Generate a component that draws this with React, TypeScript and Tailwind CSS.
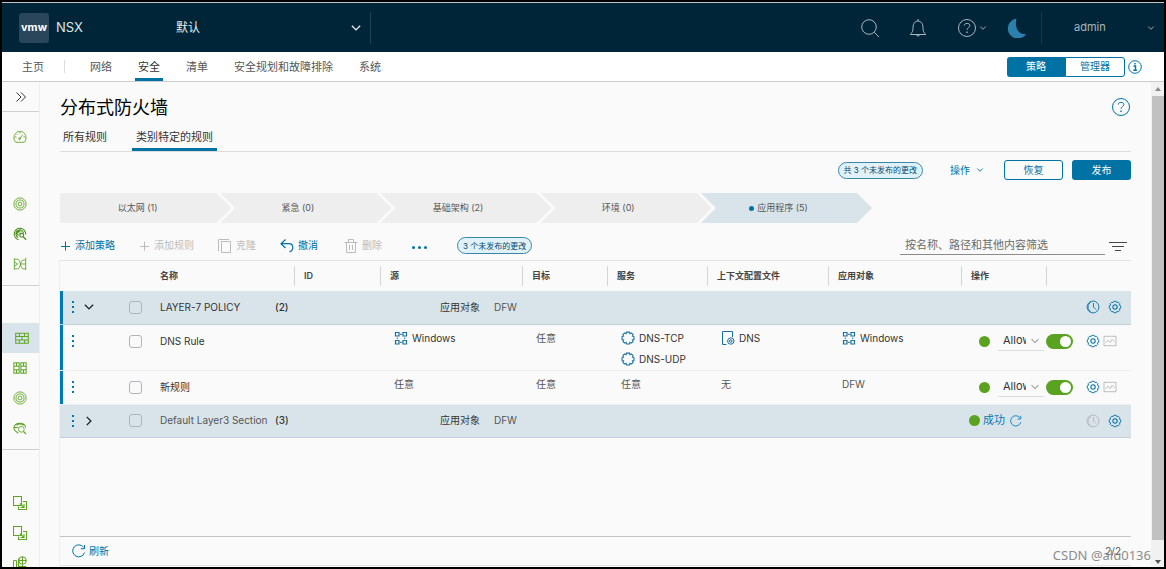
import type { ReactNode } from "react";

type IconProps = { className?: string };

function Svg({ className = "size-3.5", box = 16, children }: IconProps & { box?: number; children: ReactNode }) {
  return (
    <svg
      viewBox={`0 0 ${box} ${box}`}
      className={`shrink-0 ${className}`}
      fill="none"
      stroke="currentColor"
      strokeWidth="1"
      aria-hidden="true"
    >
      {children}
    </svg>
  );
}

const Chevron = ({ className }: IconProps) => (
  <Svg className={className}>
    <path d="M2.500 5 8 10.500 13.500 5" strokeWidth="1.800" />
  </Svg>
);

const SearchIcon = () => (
  <Svg className="size-5" box={20}>
    <circle cx="9" cy="9" r="7.300" />
    <path d="m14.300 14.300 4.700 4.700" />
  </Svg>
);

const BellIcon = () => (
  <Svg className="size-5" box={20}>
    <path d="M2 16.500h16M2.500 16c2-1.600 2.500-3 2.500-6.500C5 5.500 7.300 3 10 3s5 2.500 5 6.500c0 3.500.5 4.900 2.500 6.500M10 3V1M8.500 17c.2 1.300 2.800 1.300 3 0" />
  </Svg>
);

const HelpIcon = ({ className }: IconProps) => (
  <Svg className={className} box={20}>
    <circle cx="10" cy="10" r="8.500" />
    <path d="M7.200 7.600C7.400 4.600 12.800 4.600 12.800 7.600c0 2-2.800 2.200-2.800 4.200" />
    <path d="M10 13.500v1.500" strokeWidth="1.400" />
  </Svg>
);

const InfoIcon = () => (
  <Svg className="size-3.5" box={14}>
    <circle cx="7" cy="7" r="6.300" />
    <path d="M5.500 6h2v4M5.300 10.300h3.600M7 3v1.500" strokeWidth="1.400" />
  </Svg>
);

const MoonIcon = () => (
  <svg viewBox="0 0 20 20" className="size-5 fill-[#2d80ad]" aria-hidden="true">
    <path d="M9.500.6A10 10 0 1 0 19.200 16 C12.500 17.200 7 10.500 9.500.6z" />
  </svg>
);

const PlusIcon = () => (
  <Svg className="size-2.5" box={10}>
    <path d="M5.500 .5v9M1 5.500h9" />
  </Svg>
);

const CopyIcon = () => (
  <Svg className="size-3.5" box={14}>
    <path d="M3.500 2.500h9v11h-9zM.5 12V.5H11" />
  </Svg>
);

const UndoIcon = () => (
  <Svg className="size-3.5" box={14}>
    <path d="M5.500 .5 1 4.700 5.500 9M1.500 4.700H9c5 0 5 7 .5 8.200" strokeWidth="1.200" />
  </Svg>
);

const TrashIcon = () => (
  <Svg className="size-3.5" box={14}>
    <path d="M.5 3.500h13M2.500 3.500v10h9v-10M4.500 3V.5h5V3M5.500 6v5M8.500 6v5" />
  </Svg>
);

const FilterIcon = () => (
  <Svg className="h-2.5 w-[18px] text-[#454545]" box={10}>
    <path d="M-4 1.500h18M-1 5.500h12M2 9.500h6" />
  </Svg>
);

const RefreshIcon = ({ className }: IconProps) => (
  <Svg className={className} box={14}>
    <path d="M12.500 8.500A6 6 0 1 1 11.500 3.200M12.500 1v3.700H8.800" />
  </Svg>
);

const GearIcon = () => (
  <Svg className="size-3.5">
    <path d="M6.500 1.500h3l.6 1.500 1.600-.6 1.900 1.900-.6 1.600 1.500.6v3l-1.500.6.6 1.600-1.900 1.900-1.600-.6-.6 1.500h-3l-.6-1.500-1.600.6-1.900-1.900.6-1.600L1.500 9.500v-3L3 5.900l-.6-1.600 1.900-1.900 1.600.6z" />
    <circle cx="8" cy="8" r="2.500" strokeWidth="1.200" />
  </Svg>
);

const ClockIcon = () => (
  <Svg className="size-3.5">
    <circle cx="8" cy="8" r="6.800" />
    <path d="M5.500 2.500a6.400 6.400 0 0 0 0 11M8.500 3.500V8l3 3" />
  </Svg>
);

const ChartIcon = () => (
  <Svg className="h-3 w-3.5 text-[#b3b3b3]" box={14}>
    <path d="M0 1.500h14v11H0zM2 9l2.500-3L7 9l2.500-4 3 3" />
  </Svg>
);

const ServiceIcon = () => (
  <Svg className="size-3.5 text-[#1b6f9e]">
    <path
      d="M6.300 1.300h3.400l.5 1.800 1.700-.9 2 2-.9 1.700 1.800.5v3.300l-1.800.5.9 1.700-2 2-1.700-.9-.5 1.800H6.300l-.5-1.800-1.700.9-2-2 .9-1.700L1.200 9.700V6.400L3 5.900l-.9-1.700 2-2 1.700.9z"
      strokeWidth="1.200"
    />
  </Svg>
);

const GroupIcon = () => (
  <Svg className="size-3.5 text-[#1b6f9e]" box={14}>
    <path d="M1.500 1.500h3.500V5H1.500zM9 1.500h3.500V5H9zM1.500 9.500H5V13H1.500zM9 9.500h3.500V13H9z" strokeWidth="1.200" />
    <path d="M6 3.300h2M6 11.300h2M3.300 6.500v1.500M10.700 6.500v1.500" />
  </Svg>
);

const ProfileIcon = () => (
  <Svg className="size-3.5 text-[#1b6f9e]" box={14}>
    <path d="M5.500 13.500h-4V.5h10V6" />
    <circle cx="9.800" cy="10" r="3.200" />
    <circle cx="9.800" cy="10" r="1.300" />
  </Svg>
);

const GaugeIcon = () => (
  <Svg>
    <path d="M3 14C.8 12 .8 8.500 1.500 6.500 4-.2 12-.2 14.500 6.500c.7 2 .7 5.500-1.500 7.500zM7.500 10 11 5.500M8 2v2M2 8h2M12 8h2M4 4.500l1 1" />
    <circle cx="7.500" cy="10" r="1" />
  </Svg>
);

const TargetIcon = () => (
  <Svg>
    <circle cx="8" cy="8" r="7" />
    <circle cx="8" cy="8" r="4.600" />
    <circle cx="8" cy="8" r="2.200" />
  </Svg>
);

const DetectIcon = () => (
  <Svg className="size-3.5 text-[#4a8c1a]">
    <path d="M14.500 8.500A6.600 6.600 0 1 0 6.500 14.500M12 7A4.400 4.400 0 1 0 6 12M8.500 6a2.200 2.200 0 1 0-2 3.500" strokeWidth="1.200" />
    <path d="M3 3.500l4.500 4.500M8 1.500v3" />
    <circle cx="10" cy="9.500" r="2.200" strokeWidth="1.300" />
    <path d="m11.500 11 3.500 3.500" strokeWidth="1.500" />
  </Svg>
);

const FlowIcon = () => (
  <Svg>
    <path d="M1.500 1.500v13M14.500 1v14M1.500 2.500h4c3 0 3 11 6 11h3M1.500 13.500h4c3 0 3-10 6-10h3M8 8h6.500M1.500 5.500l4 2.500-4 2.500" />
  </Svg>
);

const WallIcon = () => (
  <Svg>
    <path d="M.8 2.500h14.400v11.500H.8zM.8 6.300h14.400M.8 10.200h14.400M5 2.500v3.800M11 2.500v3.800M8 6.300v3.900M5 10.200V14M11 10.200V14" strokeWidth="1.200" />
  </Svg>
);

const GatewayIcon = () => (
  <Svg>
    <path d="M1 2h6v12H1zM9 2h6v12H9zM1 6h6M1 10h6M9 6h6M9 10h6M4 2v4M4 10v4M12 2v4M12 10v4" strokeWidth="1.200" />
  </Svg>
);

const InspectIcon = () => (
  <Svg>
    <path d="M1 7.500C2 1 13.500 1 14.500 7.500M1 7.500h5M3 11.500C1.500 10.500 1 9 1 7.500M4 5c2-2 6-2 8 0M3 11.500l3 2.500" strokeWidth="1.200" />
    <circle cx="9.500" cy="9.500" r="3.300" />
    <path d="m12 12 3 3" strokeWidth="1.400" />
  </Svg>
);

const TransferIcon = () => (
  <Svg box={14}>
    <path d="M.5 .5h8v9h-8zM10 5.500h3.500v8h-8V10.500M7 7.500l3.500 3.500M11 8v3.500H7.500" strokeWidth="1.100" />
  </Svg>
);

const EndpointIcon = () => (
  <Svg box={14}>
    <path d="M.5 14V4.500h3V14M5.500 14V2.500M5.500 10.500h7.500V14M9.500 9v5" />
    <circle cx="9.500" cy="4.500" r="3.800" />
    <path d="M5.500 4.500h8M9.500 .5v8" />
  </Svg>
);

const MoreButton = ({ name }: { name: string }) => (
  <button type="button" aria-label={`${name} 菜单`} className="flex w-2 flex-col items-center gap-[3px]">
    <i className="size-[2px] bg-[#0079b8]" />
    <i className="size-[2px] bg-[#0079b8]" />
    <i className="size-[2px] bg-[#0079b8]" />
  </button>
);

const Tick = ({ name }: { name: string }) => (
  <input
    type="checkbox"
    aria-label={name}
    className="size-[13px] appearance-none rounded-[3px] border border-[#b0b5b8] checked:bg-[#0072a3]"
  />
);

const navItems = ["网络", "安全", "清单", "安全规划和故障排除", "系统"];

const sideGroups: { label: string; icon: ReactNode }[][] = [
  [
    { label: "威胁检测", icon: <TargetIcon /> },
    { label: "入侵检测", icon: <DetectIcon /> },
    { label: "流量分析", icon: <FlowIcon /> },
  ],
  [
    { label: "分布式防火墙", icon: <WallIcon /> },
    { label: "网关防火墙", icon: <GatewayIcon /> },
    { label: "分布式 IDS", icon: <TargetIcon /> },
    { label: "恶意软件防护", icon: <InspectIcon /> },
  ],
  [
    { label: "东西向网络", icon: <TransferIcon /> },
    { label: "南北向网络", icon: <TransferIcon /> },
    { label: "端点保护", icon: <EndpointIcon /> },
  ],
];

function Header() {
  return (
    <header className="flex h-[49px] shrink-0 items-center bg-[#002538] text-[#a9b6be]">
      <div className="ml-[17px] flex size-[30px] items-center justify-center rounded-[3px] bg-[#29465a] text-[11px] font-bold text-white">
        vmw
      </div>
      <span className="ml-[7px] text-[13px] text-[#dfe6ea]">NSX</span>
      <button type="button" className="ml-[93px] flex h-8 w-[195px] items-center justify-between border-r border-[#1f4357] pr-2 text-[#e4eaee]">
        <span className="text-[12px]">默认</span>
        <Chevron className="size-3" />
      </button>
      <div className="ml-auto flex items-center">
        <button type="button" aria-label="搜索" className="mr-7"><SearchIcon /></button>
        <button type="button" aria-label="通知" className="mr-[29px]"><BellIcon /></button>
        <button type="button" aria-label="帮助" className="mr-5 flex items-center gap-0.5">
          <HelpIcon className="size-5" />
          <Chevron className="size-2" />
        </button>
        <button type="button" aria-label="深色模式"><MoonIcon /></button>
        <button type="button" className="ml-3.5 flex h-8 w-[123px] items-center justify-between border-l border-[#0f3a50] pr-[9px] pl-8 text-[11px]">
          admin
          <Chevron className="size-2" />
        </button>
      </div>
    </header>
  );
}

function TopNav() {
  return (
    <nav className="flex h-[30px] shrink-0 items-stretch border-b border-[#cccccc] bg-white text-[11px] text-[#565656]">
      <a href="#home" className="ml-5 flex items-center pt-0.5">主页</a>
      <span className="my-2 ml-5 border-l border-[#dddddd]" />
      <div className="ml-[22px] flex gap-5">
        {navItems.map((item) => (
          <a
            key={item}
            href={`#${item}`}
            className={
              item === "安全"
                ? "flex items-center border-b-[3px] border-[#0072a3] px-[3px] pt-[5px] text-[#333333]"
                : "flex items-center px-[3px] pt-0.5"
            }
          >
            {item}
          </a>
        ))}
      </div>
      <div className="ml-auto flex items-center pr-[22px] text-[10px] text-[#0072a3]">
        <button type="button" className="h-5 w-[58px] rounded-l-[3px] bg-[#0072a3] text-white">策略</button>
        <button type="button" className="h-5 w-[60px] rounded-r-[3px] border border-[#0072a3]">管理器</button>
        <button type="button" aria-label="信息" className="ml-[3px]"><InfoIcon /></button>
      </div>
    </nav>
  );
}

function SideBar() {
  return (
    <aside className="w-[38px] shrink-0 overflow-hidden border-r border-[#eeeeee] text-[#5fa624]">
      <button type="button" aria-label="展开" className="flex h-[30px] w-full items-center justify-center border-b border-[#cfcfcf] text-[#333333]">
        <Svg className="size-3" box={12}>
          <path d="m1.500 1.500 4.500 4.500-4.500 4.500M6 1.500l4.500 4.500L6 10.500" />
        </Svg>
      </button>
      <div className="pt-2.5">
        <a href="#overview" aria-label="概览" className="flex h-[30px] items-center pl-[11px]"><GaugeIcon /></a>
      </div>
      {sideGroups.map((group) => (
        <div key={group[0].label} className="border-b border-[#cfcfcf] pt-[37px] pb-1.5 last:border-0 last:pt-[38px]">
          {group.map((entry) => (
            <a
              key={entry.label}
              href={`#${entry.label}`}
              aria-label={entry.label}
              className={
                entry.label === "分布式防火墙"
                  ? "flex h-[30px] items-center bg-[#d9e4ea] pl-[13px]"
                  : "flex h-[30px] items-center pl-[11px]"
              }
            >
              {entry.icon}
            </a>
          ))}
        </div>
      ))}
    </aside>
  );
}

const steps = ["以太网 (1)", "紧急 (0)", "基础架构 (2)", "环境 (0)", "应用程序 (5)"];

function Steps() {
  return (
    <ol className="mt-[13px] flex h-[30px] w-full max-w-[812px] text-[9px] text-[#565656]">
      {steps.map((step, i) => (
        <li
          key={step}
          className={
            i === 0
              ? "flex flex-1 bg-[#eeeeee] [clip-path:polygon(0_0,calc(100%-15px)_0,100%_50%,calc(100%-15px)_100%,0_100%)]"
              : i === 4
                ? "-ml-[11px] flex flex-1 bg-[#d9e4ea] [clip-path:polygon(0_0,calc(100%-15px)_0,100%_50%,calc(100%-15px)_100%,0_100%,15px_50%)]"
                : "-ml-[11px] flex flex-1 bg-[#eeeeee] [clip-path:polygon(0_0,calc(100%-15px)_0,100%_50%,calc(100%-15px)_100%,0_100%,15px_50%)]"
          }
        >
          <a href={`#step-${i + 1}`} className="flex flex-1 items-center justify-center gap-[3px] pr-4">
            {i === 4 && <i className="size-[5px] rounded-full bg-[#0072a3]" />}
            {step}
          </a>
        </li>
      ))}
    </ol>
  );
}

function ToolBar() {
  return (
    <div className="mt-2 flex h-[29px] items-center text-[10px] text-[#0072a3]">
      <button type="button" className="flex items-center gap-[5px]"><PlusIcon />添加策略</button>
      <button type="button" disabled className="ml-6 flex items-center gap-[5px] text-[#bcbcbc]"><PlusIcon />添加规则</button>
      <button type="button" disabled className="ml-6 flex items-center gap-1 text-[#bcbcbc]"><CopyIcon />克隆</button>
      <button type="button" className="ml-6 flex items-center gap-1"><UndoIcon />撤消</button>
      <button type="button" disabled className="ml-[26px] flex items-center gap-1 text-[#bcbcbc]"><TrashIcon />删除</button>
      <button type="button" aria-label="更多" className="ml-[30px] flex gap-[3px] pt-1">
        <i className="size-[3px] rounded-full bg-[#0072a3]" />
        <i className="size-[3px] rounded-full bg-[#0072a3]" />
        <i className="size-[3px] rounded-full bg-[#0072a3]" />
      </button>
      <span className="ml-[30px] flex h-[17px] items-center rounded-full border border-[#3a86ab] bg-[#e1f1f9] px-[5px] text-[8px] text-[#004a70]">
        3 个未发布的更改
      </span>
      <input
        type="text"
        aria-label="筛选"
        placeholder="按名称、路径和其他内容筛选"
        className="mr-1 ml-auto h-[18px] w-[205px] border-b border-[#8c8c8c] px-[5px] text-[11px] outline-none placeholder:text-[#6a6a6a]"
      />
      <button type="button" aria-label="筛选选项" className="mr-1"><FilterIcon /></button>
    </div>
  );
}

const columns = ["名称", "ID", "源", "目标", "服务", "上下文配置文件", "应用对象", "操作", ""];

function SectionRow({ name, count, open }: { name: string; count: number; open?: boolean }) {
  return (
    <tr className="h-[33px] border-b border-[#c3d0d8] bg-[#d9e4ea]">
      <td className={open ? "p-0 shadow-[inset_3px_0_0_#0079b8]" : "p-0"}>
        <div className="flex items-center pl-[9px]">
          <MoreButton name={name} />
          <button type="button" aria-label={`展开 ${name}`} className="ml-1.5 text-[#222222]">
            <Chevron className={open ? "size-3" : "size-3 -rotate-90"} />
          </button>
          <span className="ml-[34px] flex"><Tick name={name} /></span>
        </div>
      </td>
      <td className="pl-2.5">
        <div className={open ? "flex text-[#333333]" : "flex text-[#565656]"}>
          <span className="w-[115px] whitespace-nowrap">{name}</span>
          <b className="font-medium text-[#333333]">({count})</b>
        </div>
      </td>
      <td />
      <td colSpan={5} className="pl-[60px] text-[#333333]">
        应用对象<span className="ml-3.5 text-[#565656]">DFW</span>
      </td>
      <td>
        {!open && (
          <div className="flex items-center gap-[3px] pl-2 whitespace-nowrap text-[#0079b8]">
            <i className="size-[11px] shrink-0 rounded-full bg-[#5aa220]" />
            <span className="text-[11px]">成功</span>
            <button type="button" aria-label="刷新状态" className="ml-0.5"><RefreshIcon className="size-3" /></button>
          </div>
        )}
      </td>
      <td>
        <div className="flex items-center justify-end gap-2 pr-[9px] text-[#0072a3]">
          <button type="button" aria-label={`${name} 时间窗口`} disabled={!open} className="disabled:text-[#adb5ba]"><ClockIcon /></button>
          <button type="button" aria-label={`${name} 设置`}><GearIcon /></button>
        </div>
      </td>
    </tr>
  );
}

const Member = ({ icon, children }: { icon: ReactNode; children: ReactNode }) => (
  <a href="#member" className="flex h-[21px] items-center gap-1 text-[#333333]">
    {icon}
    {children}
  </a>
);

const Plain = ({ children }: { children: ReactNode }) => <span className="flex h-[21px] items-center text-[#565656]">{children}</span>;

type Rule = { name: string; source: ReactNode; target: ReactNode; service: ReactNode; context: ReactNode; applied: ReactNode };

const rules: Rule[] = [
  {
    name: "DNS Rule",
    source: <Member icon={<GroupIcon />}>Windows</Member>,
    target: <Plain>任意</Plain>,
    service: (
      <>
        <Member icon={<ServiceIcon />}>DNS-TCP</Member>
        <Member icon={<ServiceIcon />}>DNS-UDP</Member>
      </>
    ),
    context: <Member icon={<ProfileIcon />}>DNS</Member>,
    applied: <Member icon={<GroupIcon />}>Windows</Member>,
  },
  {
    name: "新规则",
    source: <Plain>任意</Plain>,
    target: <Plain>任意</Plain>,
    service: <Plain>任意</Plain>,
    context: <Plain>无</Plain>,
    applied: <Plain>DFW</Plain>,
  },
];

function RuleRow({ rule }: { rule: Rule }) {
  return (
    <tr className="h-[34px] border-b border-[#eeeeee] align-top">
      <td className="p-0 shadow-[inset_3px_0_0_#0079b8]">
        <div className="flex h-[33px] items-center pl-[9px]">
          <MoreButton name={rule.name} />
          <span className="ml-[52px] flex"><Tick name={rule.name} /></span>
        </div>
      </td>
      <td className="pl-2.5"><span className="flex h-[33px] items-center text-[#333333]">{rule.name}</span></td>
      <td />
      <td className="pt-[3px] pl-3.5">{rule.source}</td>
      <td className="pt-[3px] pl-3.5">{rule.target}</td>
      <td className="pt-[3px] pl-3.5">{rule.service}</td>
      <td className="pt-[3px] pl-3.5">{rule.context}</td>
      <td className="pt-[3px] pl-3.5">{rule.applied}</td>
      <td>
        <div className="flex h-[33px] items-center justify-end gap-2 pr-0.5">
          <i className="size-[11px] shrink-0 rounded-full bg-[#5aa220]" />
          <label className="relative flex items-center">
            <select aria-label={`${rule.name} 操作`} className="h-5 w-[46px] appearance-none border-b border-[#dddddd] pr-[18px] pl-[5px] text-[11px] text-[#333333]">
              <option>Allow</option>
              <option>Drop</option>
              <option>Reject</option>
            </select>
            <Chevron className="pointer-events-none absolute right-1 size-2.5 text-[#9a9a9a]" />
          </label>
        </div>
      </td>
      <td>
        <div className="flex h-[33px] items-center">
          <input
            type="checkbox"
            defaultChecked
            aria-label={`启用 ${rule.name}`}
            className="h-[15px] w-[27px] shrink-0 appearance-none rounded-full bg-[#9a9a9a] p-[2px] before:block before:size-[11px] before:rounded-full before:bg-white checked:bg-[#5aa220] checked:pl-3.5"
          />
          <button type="button" aria-label={`${rule.name} 设置`} className="ml-[13px] text-[#0072a3]"><GearIcon /></button>
          <button type="button" aria-label={`${rule.name} 统计`} className="ml-[3px]"><ChartIcon /></button>
        </div>
      </td>
    </tr>
  );
}

function RuleTable() {
  return (
    <table className="w-full table-fixed border-collapse text-[10px]">
      <colgroup>
        <col className="w-[90px]" />
        <col className="w-[144px]" />
        <col className="w-[86px]" />
        <col className="w-[142px]" />
        <col className="w-[85px]" />
        <col className="w-[100px]" />
        <col className="w-[121px]" />
        <col className="w-[133px]" />
        <col className="w-[85px]" />
        <col className="w-[85px]" />
      </colgroup>
      <thead>
        <tr className="h-[30px] text-left text-[9px] text-[#454545]">
          <td />
          {columns.map((column, i) => (
            <th key={column} className="p-0 font-semibold">
              <span className={i === 0 ? "flex h-5 items-center pl-2.5" : "flex h-5 items-center border-l border-[#d5d5d5] pl-[9px]"}>{column}</span>
            </th>
          ))}
        </tr>
      </thead>
      <tbody>
        <SectionRow name="LAYER-7 POLICY" count={2} open />
        {rules.map((rule) => (
          <RuleRow key={rule.name} rule={rule} />
        ))}
        <SectionRow name="Default Layer3 Section" count={3} />
      </tbody>
    </table>
  );
}

function ScrollBar() {
  return (
    <div className="flex w-[13px] shrink-0 flex-col items-center bg-[#f1f1f1]" aria-hidden="true">
      <i className="my-[5px] border-x-[3px] border-b-[4px] border-x-transparent border-b-[#8a8a8a]" />
      <div className="w-full flex-1 border-l border-[#f1f1f1] bg-[#c1c1c1]" />
      <i className="mt-5 mb-[3px] border-x-[3px] border-t-[4px] border-x-transparent border-t-[#505050]" />
    </div>
  );
}

export default function App() {
  return (
    <div className="relative flex h-screen flex-col overflow-hidden border-2 border-black bg-[#fafafa] font-['Inter','Noto_Sans_CJK_SC',sans-serif]">
      <div className="h-px shrink-0 bg-[#c4c4c4]" />
      <Header />
      <TopNav />
      <div className="flex min-h-0 flex-1">
        <SideBar />
        <main className="flex min-w-0 flex-1 flex-col px-5 pb-px">
          <div className="flex h-[50px] items-center justify-between">
            <h1 className="text-[18px] text-black">分布式防火墙</h1>
            <button type="button" aria-label="页面帮助" className="text-[#0072a3]"><HelpIcon className="size-5" /></button>
          </div>
          <div className="-mt-2 flex h-7 shrink-0 gap-[25px] border-b border-[#dddddd] text-[11px] text-[#333333]">
            <a href="#all" className="flex items-center pl-[3px]">所有规则</a>
            <a href="#category" className="flex items-center border-b-[3px] border-[#0072a3] px-1 pt-[3px]">类别特定的规则</a>
          </div>
          <div className="mt-2 flex h-5 shrink-0 items-center justify-end text-[10px] text-[#0072a3]">
            <span className="flex h-[17px] items-center rounded-full border border-[#3a86ab] bg-[#e1f1f9] px-[5px] text-[8px] text-[#004a70]">
              共 3 个未发布的更改
            </span>
            <button type="button" className="ml-[27px] flex items-center gap-1.5">操作<Chevron className="size-2" /></button>
            <button type="button" className="ml-5 h-5 w-[59px] rounded-[3px] border border-[#0072a3]">恢复</button>
            <button type="button" className="ml-[9px] h-5 w-[59px] rounded-[3px] bg-[#0072a3] text-white">发布</button>
          </div>
          <Steps />
          <ToolBar />
          <section className="flex flex-1 flex-col border-t border-b border-[#e4e4e4] shadow-[-1px_0_0_#eeeeee]">
            <RuleTable />
            <footer className="mt-auto flex h-[29px] items-center border-t border-[#c4c4c4] pr-2.5 pl-3 text-[10px]">
              <button type="button" className="flex items-center gap-[3px] text-[#0072a3]"><RefreshIcon className="size-3.5" />刷新</button>
              <span className="ml-auto text-[#565656]">2/2</span>
            </footer>
          </section>
        </main>
        <ScrollBar />
      </div>
      <div className="pointer-events-none absolute right-[13px] bottom-1 font-['Noto_Sans',sans-serif] text-[13px] leading-4 text-[#8c8c8c]">
        CSDN @alu0136
      </div>
    </div>
  );
}
